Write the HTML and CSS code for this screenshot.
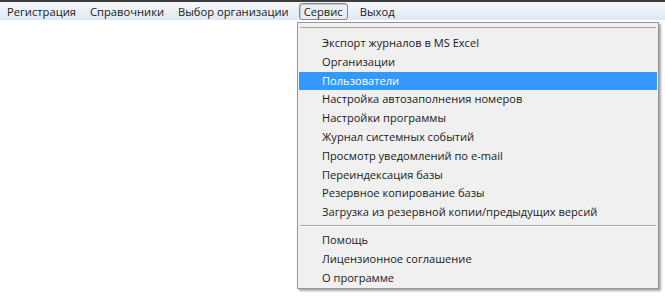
FILE: index.html
```html
<!DOCTYPE html>
<html lang="ru">
<head>
    <meta charset="UTF-8">
    <meta name="viewport" content="width=device-width, initial-scale=1.0">
    <title>Сервис</title>
    <link rel="stylesheet" href="styles.css">
</head>
<body>
    <div class="menubar">
        <span class="menu-item">Регистрация</span>
        <span class="menu-item">Справочники</span>
        <span class="menu-item">Выбор организации</span>
        <span class="menu-item active">Сервис</span>
        <span class="menu-item">Выход</span>
    </div>

    <!-- выпадающее меню "Сервис" -->
    <div class="dropdown">
        <div class="top-line"></div>
        <div class="item">Экспорт журналов в MS Excel</div>
        <div class="item">Организации</div>
        <div class="item selected">Пользователи</div>
        <div class="item">Настройка автозаполнения номеров</div>
        <div class="item">Настройки программы</div>
        <div class="item">Журнал системных событий</div>
        <div class="item">Просмотр уведомлений по e-mail</div>
        <div class="item">Переиндексация базы</div>
        <div class="item">Резервное копирование базы</div>
        <div class="item">Загрузка из резервной копии/предыдущих версий</div>
        <div class="separator"></div>
        <div class="item">Помощь</div>
        <div class="item">Лицензионное соглашение</div>
        <div class="item">О программе</div>
    </div>
</body>
</html>
```

FILE: styles.css
```css
body {
    font-family: "Open Sans", "Noto Sans", sans-serif;
    font-size: 11.1px;
    color: #1a1a1a;
    background-color: #fff;
    margin: 0;
    padding: 0;
}

.menubar {
    display: flex;
    align-items: center;
    height: 18px;
    padding-left: 3px;
    font-size: 11.2px;
    border-top: 2px solid #3c3c3c;
    background: linear-gradient(#f7f9fc, #dfe7f2);
}
.menu-item {
    padding: 0 3px;
    line-height: 15px;
    border: 1px solid transparent;
    border-radius: 3px;
    margin-right: 6px;
}
.menu-item.active {
    padding: 0 4px;
    margin-right: 8px;
    border-color: #8a8a8a;
    background-color: #e9eef5;
    box-shadow: inset 1px 1px 0 #c4c9d0;
}

.dropdown {
    position: absolute;
    left: 297px;
    top: 22px;
    width: 358px;
    padding: 4px 1px 1px 1px;
    background-color: #f0f0f0;
    border: 1px solid #979797;
    box-shadow: 2px 2px 2px rgba(0, 0, 0, 0.35);
}
.top-line {
    height: 1px;
    margin: 0 1px 6px 1px;
    background-color: #a6a6a6;
}
.item {
    height: 18.8px;
    line-height: 18.8px;
    padding-left: 23px;
    white-space: nowrap;
}
.item.selected {
    background-color: #3399ff;
    color: #fff;
}
.separator {
    height: 1px;
    margin: 3px 1px 5px 1px;
    background-color: #a6a6a6;
    box-shadow: 0 1px 0 #fff;
}
```
